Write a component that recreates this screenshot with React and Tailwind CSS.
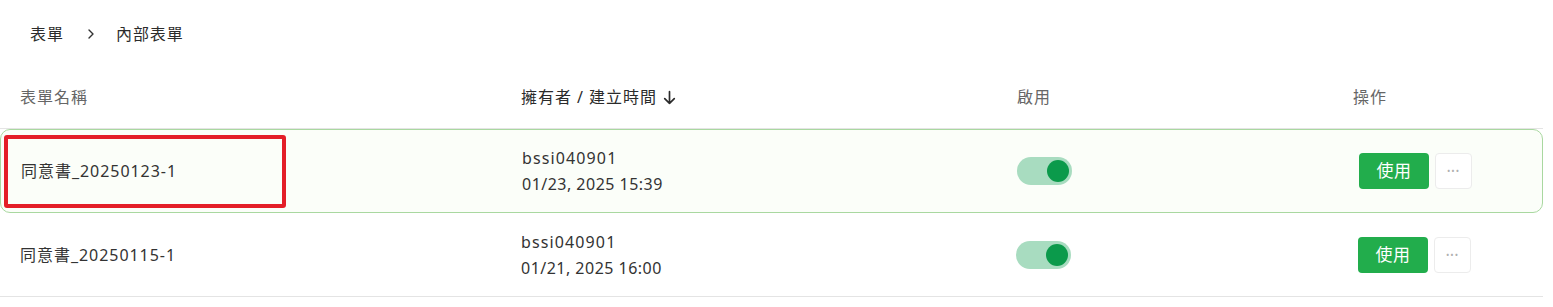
import React from "react";

const rows = [
  { name: "同意書_20250123-1", owner: "bssi040901", time: "01/23, 2025 15:39", active: true, marked: true },
  { name: "同意書_20250115-1", owner: "bssi040901", time: "01/21, 2025 16:00", active: true },
];

function Toggle({ on }) {
  return (
    <div className="flex h-[28px] w-[55px] items-center justify-end rounded-full bg-[#a8dcc0] px-[3px]">
      <div className={on ? "h-[22px] w-[22px] rounded-full bg-[#0b9a4b]" : "h-[22px] w-[22px] rounded-full bg-white"} />
    </div>
  );
}

function Row({ row }) {
  const box = row.marked
    ? "grid h-[84px] grid-cols-[501px_496px_336px_210px] items-center rounded-[10px] border border-[#a9d8a0] bg-[#fbfef9]"
    : "grid h-[84px] grid-cols-[501px_496px_336px_210px] items-center border-b border-[#e4e4e4]";
  return (
    <div className={box}>
      <div className="relative flex h-full items-center pl-5 tracking-[0.06em]">
        {row.marked && (
          <div className="absolute left-[3px] top-[5px] h-[73px] w-[282px] rounded-[3px] border-[4px] border-[#e41e28]" />
        )}
        <span>{row.name}</span>
      </div>
      <div className="flex flex-col pl-5 leading-[26px]">
        <span className="tracking-[0.07em]">{row.owner}</span>
        <span>{row.time}</span>
      </div>
      <div className="pl-[19px]">
        <Toggle on={row.active} />
      </div>
      <div className="flex items-center gap-[6px] pl-[25px]">
        <button className="h-9 w-[70px] rounded-[4px] bg-[#22ad4c] text-[17px] text-white">使用</button>
        <button className="flex h-9 w-[37px] items-center justify-center rounded-[4px] border border-[#ececec] bg-white text-[9px] tracking-[1px] text-[#b0b0b0]">
          •••
        </button>
      </div>
    </div>
  );
}

export default function App() {
  return (
    <div
      className="h-[307px] w-[1553px] bg-white text-[16px] tracking-[0.03em] text-[#333]"
      style={{ fontFamily: '"Noto Sans", "Noto Sans CJK TC", sans-serif' }}
    >
      <div className="flex h-[66px] items-center pl-[30px] pt-[1px] tracking-[0.06em] text-[#2b2b2b]">
        <span>表單</span>
        <svg className="ml-[22px] mr-[20px]" width="10" height="12" viewBox="0 0 10 12" fill="none" stroke="#333" strokeWidth="1.4" strokeLinecap="round" strokeLinejoin="round">
          <path d="M3 2l4 4-4 4" />
        </svg>
        <span>內部表單</span>
      </div>
      <div className="w-[1543px]">
        <div className="grid h-[63px] grid-cols-[501px_496px_336px_210px] items-center border-b border-[#e4e4e4] tracking-[0.06em] text-[#666]">
          <div className="pl-5">表單名稱</div>
          <div className="flex items-center gap-1 pl-5 text-[#2b2b2b]">
            擁有者 / 建立時間
            <svg width="17" height="17" viewBox="0 0 16 16" fill="none" stroke="#2b2b2b" strokeWidth="1.6" strokeLinecap="round" strokeLinejoin="round">
              <path d="M8 2.5v11M3.5 9l4.5 4.5L12.5 9" />
            </svg>
          </div>
          <div className="pl-5">啟用</div>
          <div className="pl-5">操作</div>
        </div>
        {rows.map((r) => (
          <Row key={r.name} row={r} />
        ))}
      </div>
    </div>
  );
}
